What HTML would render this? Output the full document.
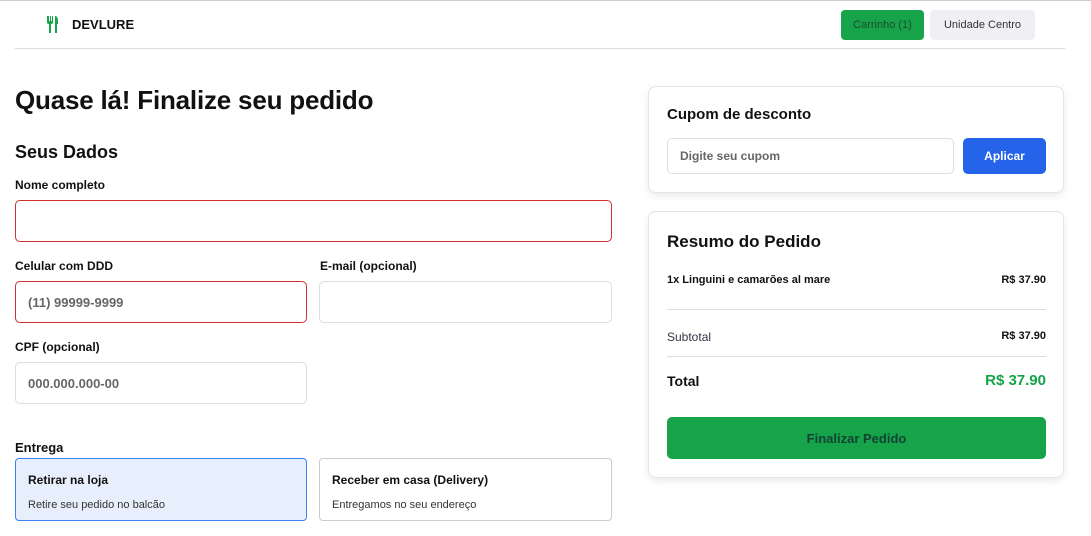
<!DOCTYPE html>
<html><head><meta charset="utf-8"><style>
*{box-sizing:border-box;margin:0;padding:0}
body{width:1091px;height:536px;overflow:hidden;background:#fff;font-family:"Liberation Sans",sans-serif;color:#111;position:relative}
.a{position:absolute}
.hdr{left:15px;top:48px;width:1050px;height:1px;background:#ddd}
.logo{left:72px;top:17px;font-weight:bold;font-size:13px}
.btn{border-radius:4px;font-size:11px;display:flex;align-items:center;justify-content:center}
h1{position:absolute;left:15px;top:85px;font-size:26px;font-weight:bold;letter-spacing:-0.2px}
.lbl{font-size:12px;font-weight:bold}
.in{border:1px solid #ddd;border-radius:5px;font-size:13px;color:#666;font-weight:bold;padding-left:12px;display:flex;align-items:center}
.red{border-color:#d32f2f}
.card{border:1px solid #e3e3e8;border-radius:8px;box-shadow:0 3px 8px rgba(0,0,0,.08);background:#fff}
.opt{border:1px solid #ccc;border-radius:4px;padding:14px 12px}
.opt b{font-size:12px;display:block;margin-bottom:8px}
.opt span{font-size:11px;color:#333}
.r{right:45px;text-align:right}
</style></head><body>
<div class="a" style="left:0;top:0;width:1091px;height:1px;background:#ccc"></div>
<svg class="a" style="left:46px;top:16px" width="14" height="17" viewBox="0 0 14 17"><path d="M1 0v6a2 2 0 0 0 2 2v9h2V8a2 2 0 0 0 2-2V0H6v5H5V0H4v5H3V0z" fill="#16a34a"/><path d="M9 0c2 0 3 2 3 5v3h-1v9H9z" fill="#16a34a"/></svg>
<div class="a logo">DEVLURE</div>
<div class="a btn" style="left:841px;top:10px;width:83px;height:30px;background:#16a34a;color:#1e4d2e">Carrinho (1)</div>
<div class="a btn" style="left:930px;top:10px;width:105px;height:30px;background:#f0f0f4;color:#333">Unidade Centro</div>
<div class="a hdr"></div>
<h1>Quase lá! Finalize seu pedido</h1>
<div class="a" style="left:15px;top:142px;font-size:18px;font-weight:bold">Seus Dados</div>
<div class="a lbl" style="left:15px;top:178px">Nome completo</div>
<div class="a in red" style="left:15px;top:200px;width:597px;height:42px"></div>
<div class="a lbl" style="left:15px;top:259px">Celular com DDD</div>
<div class="a in red" style="left:15px;top:281px;width:292px;height:42px">(11) 99999-9999</div>
<div class="a lbl" style="left:320px;top:259px">E-mail (opcional)</div>
<div class="a in" style="left:319px;top:281px;width:293px;height:42px"></div>
<div class="a lbl" style="left:15px;top:340px">CPF (opcional)</div>
<div class="a in" style="left:15px;top:362px;width:292px;height:42px">000.000.000-00</div>
<div class="a" style="left:15px;top:440px;font-size:13px;font-weight:bold">Entrega</div>
<div class="a opt" style="left:15px;top:458px;width:292px;height:63px;background:#e8effc;border-color:#3b82f6"><b>Retirar na loja</b><span>Retire seu pedido no balcão</span></div>
<div class="a opt" style="left:319px;top:458px;width:293px;height:63px"><b>Receber em casa (Delivery)</b><span>Entregamos no seu endereço</span></div>

<div class="a card" style="left:648px;top:86px;width:416px;height:107px"></div>
<div class="a" style="left:667px;top:106px;font-size:15px;font-weight:bold">Cupom de desconto</div>
<div class="a in" style="left:667px;top:138px;width:287px;height:36px;font-size:12px">Digite seu cupom</div>
<div class="a btn" style="left:963px;top:138px;width:83px;height:36px;background:#2563eb;color:#fff;font-weight:bold;font-size:12px;border-radius:5px">Aplicar</div>

<div class="a card" style="left:648px;top:211px;width:416px;height:267px"></div>
<div class="a" style="left:667px;top:232px;font-size:17px;font-weight:bold">Resumo do Pedido</div>
<div class="a" style="left:667px;top:274px;font-size:11px;font-weight:bold">1x Linguini e camarões al mare</div>
<div class="a r" style="top:274px;font-size:11px;font-weight:bold">R$ 37.90</div>
<div class="a" style="left:667px;top:309px;width:379px;height:1px;background:#ddd"></div>
<div class="a" style="left:667px;top:330px;font-size:12px;color:#334">Subtotal</div>
<div class="a r" style="top:330px;font-size:11px;font-weight:bold">R$ 37.90</div>
<div class="a" style="left:667px;top:356px;width:379px;height:1px;background:#ddd"></div>
<div class="a" style="left:667px;top:373px;font-size:14px;font-weight:bold">Total</div>
<div class="a r" style="top:372px;font-size:15px;font-weight:bold;color:#16a34a">R$ 37.90</div>
<div class="a btn" style="left:667px;top:417px;width:379px;height:42px;background:#16a34a;color:#143;font-weight:bold;font-size:13px;border-radius:5px">Finalizar Pedido</div>
</body></html>
